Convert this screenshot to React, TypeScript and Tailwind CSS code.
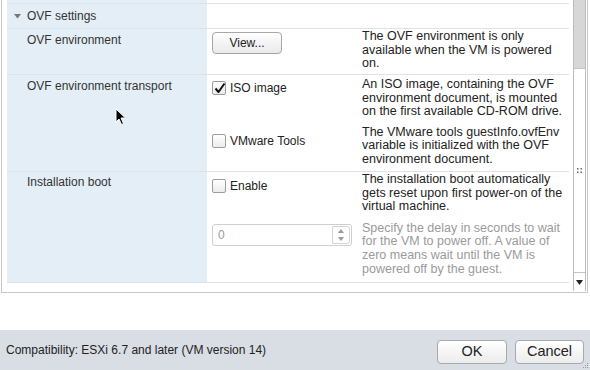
import React from 'react'

function Checkbox({ checked = false }: { checked?: boolean }) {
  return (
    <span className="relative w-[14px] h-[14px] shrink-0 border border-[#9c9c9c] rounded-[2px] bg-gradient-to-b from-white to-[#ececec]">
      {checked && (
        <svg className="absolute left-[1px] top-[0px]" width="12" height="12" viewBox="0 0 12 12">
          <path d="M1.5 6.5 L4.5 10 L10.5 1.5" fill="none" stroke="#111" strokeWidth="2" strokeLinejoin="round" />
        </svg>
      )}
    </span>
  )
}

function Row({ h, label, children, first }: { h: string; label?: React.ReactNode; children?: React.ReactNode; first?: string }) {
  return (
    <div className={`${h} grid grid-cols-[200px_1fr] border-b border-[#dde3e8]`}>
      <div className={`bg-[#e4eef6] pl-[20px] text-[12px] ${first ?? ''}`}>{label}</div>
      <div className="pl-[5px]">{children}</div>
    </div>
  )
}

export default function App() {
  return (
    <div className="w-[590px] h-[370px] bg-white relative overflow-hidden font-['Liberation_Sans',Arial,sans-serif] text-[12.5px] text-[#333]">
      <div className="ml-[1px] w-[587px] h-[293px] border-x border-b border-[#c8c8c8] flex pl-[5px]">
        <div className="w-[562px] flex flex-col">
          <Row h="h-[4px]" />

          <div className="h-[25px] grid grid-cols-[200px_1fr] border-b border-[#dde3e8]">
            <div className="bg-[#e4eef6] flex items-center pl-[7px] gap-[6px]">
              <svg width="7" height="5" viewBox="0 0 7 5">
                <path d="M0 0 L7 0 L3.5 4.5 Z" fill="#777" />
              </svg>
              <span className="text-[#333] text-[12px]">OVF settings</span>
            </div>
            <div />
          </div>

          <Row h="h-[46px]" label="OVF environment" first="pt-[4px] leading-[15px]">
            <div className="flex">
              <div className="w-[150px] shrink-0 pt-[3px]">
                <button className="w-[70px] h-[22px] border border-[#a6a6a6] rounded-[4px] bg-gradient-to-b from-white to-[#e9e9e9] text-[12px] text-[#222]">
                  View...
                </button>
              </div>
              <p className="flex-1 leading-[13.5px] text-[#222] pt-[1px]">
                The OVF environment is only available when the VM is powered on.
              </p>
            </div>
          </Row>

          <Row h="h-[97px]" label="OVF environment transport" first="pt-[4px] leading-[15px]">
            <div className="flex pt-[3px]">
              <div className="w-[150px] shrink-0 pt-[1px] flex items-center gap-[4px] h-fit">
                <Checkbox checked />
                <span className="text-[#222] text-[12px]">ISO image</span>
              </div>
              <p className="flex-1 leading-[13.5px] text-[#222]">
                An ISO image, containing the OVF environment document, is mounted on the first available CD-ROM drive.
              </p>
            </div>
            <div className="flex mt-[7px]">
              <div className="w-[150px] shrink-0 pt-[6px] flex items-center gap-[4px] h-fit">
                <Checkbox />
                <span className="text-[#222] text-[12px]">VMware Tools</span>
              </div>
              <p className="flex-1 leading-[13.5px] text-[#222]">
                The VMware tools guestInfo.ovfEnv variable is initialized with the OVF environment document.
              </p>
            </div>
          </Row>

          <Row h="h-[111px]" label="Installation boot" first="pt-[3px] leading-[15px]">
            <div className="flex">
              <div className="w-[150px] shrink-0 pt-[5px] flex items-center gap-[4px] h-fit">
                <Checkbox />
                <span className="text-[#222] text-[12px]">Enable</span>
              </div>
              <p className="flex-1 leading-[13.5px] text-[#222] pt-[1px]">
                The installation boot automatically gets reset upon first power-on of the virtual machine.
              </p>
            </div>
            <div className="flex mt-[8px]">
              <div className="w-[150px] shrink-0 pt-[2px]">
                <div className="w-[140px] h-[22px] border border-[#cfcfcf] rounded-[3px] flex items-center">
                  <span className="flex-1 pl-[5px] text-[#9a9a9a] text-[12px]">0</span>
                  <div className="w-[18px] h-[18px] mr-[1px] border border-[#d4d4d4] rounded-r-[3px] flex flex-col items-center justify-center gap-[4px]">
                    <svg width="6" height="4" viewBox="0 0 6 4"><path d="M0 4 L6 4 L3 0 Z" fill="#999" /></svg>
                    <svg width="6" height="4" viewBox="0 0 6 4"><path d="M0 0 L6 0 L3 4 Z" fill="#999" /></svg>
                  </div>
                </div>
              </div>
              <p className="flex-1 leading-[13.8px] text-[#9a9a9a]">
                Specify the delay in seconds to wait for the VM to power off. A value of zero means wait until the VM is powered off by the guest.
              </p>
            </div>
          </Row>
        </div>

        <div className="ml-[4px] w-[13px] h-[291px] border-x border-[#bcbcbc] flex flex-col">
          <div className="h-[68px] bg-[#d7d7d7]" />
          <div className="flex-1 bg-white border-y border-[#c4c4c4] flex items-center justify-center">
            <svg width="5" height="5" viewBox="0 0 5 5">
              <rect x="0" y="0" width="1.5" height="1.5" fill="#666" />
              <rect x="3.5" y="0" width="1.5" height="1.5" fill="#666" />
              <rect x="0" y="3.5" width="1.5" height="1.5" fill="#666" />
              <rect x="3.5" y="3.5" width="1.5" height="1.5" fill="#666" />
            </svg>
          </div>
          <div className="h-[18px] flex items-center justify-center">
            <svg width="7" height="5" viewBox="0 0 7 5"><path d="M0 0 L7 0 L3.5 5 Z" fill="#222" /></svg>
          </div>
        </div>
      </div>

      <div className="mt-[37px] h-[40px] bg-[#d9dee4] flex items-center justify-between pl-[6px] pr-[6px]">
        <span className="text-[12px] text-[#222]">Compatibility: ESXi 6.7 and later (VM version 14)</span>
        <div className="flex gap-[8px] pt-[3px]">
          <button className="w-[70px] h-[24px] border border-[#a9a9a9] rounded-[4px] bg-gradient-to-b from-white to-[#ececec] text-[14.5px] text-[#222]">
            OK
          </button>
          <button className="w-[69px] h-[24px] border border-[#a9a9a9] rounded-[4px] bg-gradient-to-b from-white to-[#ececec] text-[14.5px] text-[#222]">
            Cancel
          </button>
        </div>
      </div>

      <svg className="absolute right-[1px] bottom-[1px]" width="6" height="6" viewBox="0 0 6 6">
        <rect x="4" y="0" width="1" height="1" fill="#999" />
        <rect x="2" y="2" width="1" height="1" fill="#999" />
        <rect x="4" y="2" width="1" height="1" fill="#999" />
        <rect x="0" y="4" width="1" height="1" fill="#999" />
        <rect x="2" y="4" width="1" height="1" fill="#999" />
        <rect x="4" y="4" width="1" height="1" fill="#999" />
      </svg>

      <svg className="absolute left-[115px] top-[108px]" width="12" height="18" viewBox="0 0 12 18">
        <path d="M1 1 L1 14 L4 11 L6.5 16.5 L8.5 15.5 L6 10 L10.5 10 Z" fill="#000" stroke="#fff" strokeWidth="1" strokeLinejoin="round" />
      </svg>
    </div>
  )
}
